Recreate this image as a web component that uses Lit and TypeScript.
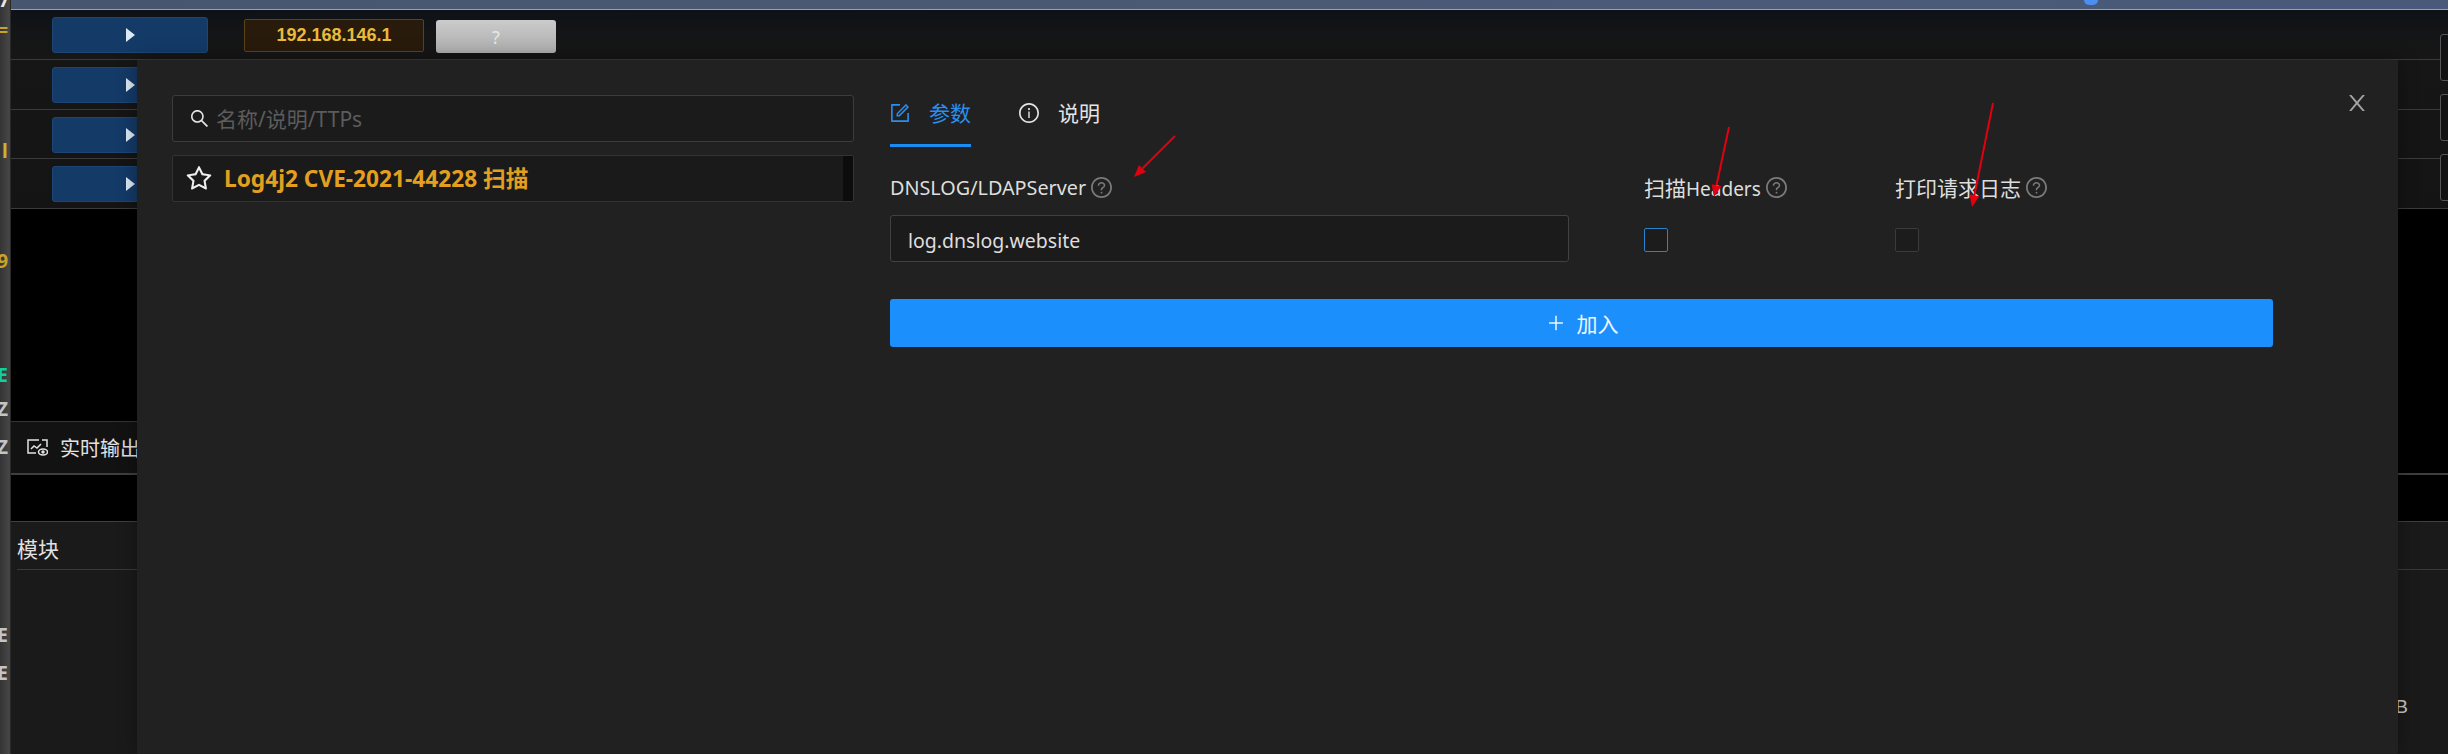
import { LitElement, html, css, svg } from "lit";
import { customElement } from "lit/decorators.js";

const CIRCLE = "M512 64C264.6 64 64 264.6 64 512s200.6 448 448 448 448-200.6 448-448S759.4 64 512 64zm0 820c-205.4 0-372-166.6-372-372s166.6-372 372-372 372 166.6 372 372-166.6 372-372 372z";
const ICONS: Record<string, string[]> = {
  search: ["M909.6 854.5L649.9 594.8C690.2 542.7 712 479 712 412c0-80.2-31.3-155.4-87.9-212.1-56.6-56.7-132-87.9-212.1-87.9s-155.5 31.3-212.1 87.9C143.2 256.5 112 331.8 112 412c0 80.1 31.3 155.5 87.9 212.1C256.5 680.8 331.8 712 412 712c67 0 130.6-21.8 182.7-62l259.7 259.6a8.2 8.2 0 0011.6 0l43.6-43.5a8.2 8.2 0 000-11.6zM570.4 570.4C528 612.7 471.8 636 412 636s-116-23.3-158.4-65.6C211.3 528 188 471.8 188 412s23.3-116.1 65.6-158.4C296 211.3 352.2 188 412 188s116.1 23.2 158.4 65.6S636 352.2 636 412s-23.3 116.1-65.6 158.4z"],
  star: ["M908.1 353.1l-253.9-36.9L540.7 86.1c-3.1-6.3-8.2-11.4-14.5-14.5-15.8-7.8-35-1.3-42.9 14.5L369.8 316.2l-253.9 36.9c-7 1-13.4 4.3-18.3 9.3a32.05 32.05 0 00.6 45.3l183.7 179.1-43.4 252.9a31.95 31.95 0 0046.4 33.7L512 754l227.1 119.4c6.2 3.3 13.4 4.4 20.3 3.2 17.4-3 29.1-19.5 26.1-36.9l-43.4-252.9 183.7-179.1c5-4.9 8.3-11.3 9.3-18.3 2.7-17.5-9.5-33.7-27-36.3zM664.8 561.6l36.1 210.3L512 672.7 323.1 772l36.1-210.3-152.8-149L417.6 382 512 190.7 606.4 382l211.2 30.7-152.8 148.9z"],
  info: [CIRCLE, "M464 336a48 48 0 1096 0 48 48 0 10-96 0zm72 112h-48c-4.4 0-8 3.6-8 8v272c0 4.4 3.6 8 8 8h48c4.4 0 8-3.6 8-8V456c0-4.4-3.6-8-8-8z"],
  help: [CIRCLE, "M623.6 316.7C593.6 290.4 554 276 512 276s-81.6 14.5-111.6 40.7C369.2 344 352 380.7 352 420v7.6c0 4.4 3.6 8 8 8h48c4.4 0 8-3.6 8-8V420c0-44.1 43.1-80 96-80s96 35.9 96 80c0 31.1-22 59.6-56.1 72.7-21.2 8.1-39.2 22.3-52.1 40.9-13.1 19-19.9 41.8-19.9 64.9V620c0 4.4 3.6 8 8 8h48c4.4 0 8-3.6 8-8v-22.7a48.3 48.3 0 0130.9-44.8c59-22.7 97.1-74.7 97.1-132.5.1-39.3-17.1-76-48.3-103.3zM472 732a40 40 0 1080 0 40 40 0 10-80 0z"],
  close: ["M563.8 512l262.5-312.9c4.4-5.2.7-13.1-6.1-13.1h-79.8c-4.7 0-9.2 2.1-12.3 5.7L511.6 449.8 295.1 191.7c-3-3.6-7.5-5.7-12.3-5.7H203c-6.8 0-10.5 7.9-6.1 13.1L459.4 512 196.9 824.9A7.95 7.95 0 00203 838h79.8c4.7 0 9.2-2.1 12.3-5.7l216.5-258.1 216.5 258.1c3 3.6 7.5 5.7 12.3 5.7h79.8c6.8 0 10.5-7.9 6.1-13.1L563.8 512z"],
  plus: ["M482 152h60q8 0 8 8v704q0 8-8 8h-60q-8 0-8-8V160q0-8 8-8z", "M176 474h672q8 0 8 8v60q0 8-8 8H176q-8 0-8-8v-60q0-8 8-8z"],
  form: ["M904 512h-56c-4.4 0-8 3.6-8 8v320H184V184h320c4.4 0 8-3.6 8-8v-56c0-4.4-3.6-8-8-8H144c-17.7 0-32 14.3-32 32v736c0 17.7 14.3 32 32 32h736c17.7 0 32-14.3 32-32V520c0-4.4-3.6-8-8-8z", "M355.9 534.9L354 653.8c-.1 8.9 7.1 16.2 16 16.2h.4l118-2.9c2-.1 4-.9 5.4-2.3l415.9-415c3.1-3.1 3.1-8.2 0-11.3L785.4 114.3c-1.6-1.6-3.6-2.3-5.7-2.3s-4.1.8-5.7 2.3l-415.8 415a8.3 8.3 0 00-2.3 5.6zm63.5 23.6L779.7 199l45.2 45.1-360.5 359.7-45.7 1.1.7-46.4z"],
};

const icon = (name: string, cls: string) => html`<svg class="ico ${cls}" viewBox="64 64 896 896" fill="currentColor">${ICONS[name].map((d) => svg`<path d=${d}></path>`)}</svg>`;

const MARKS = [
  { top: 0, h: 7, t: "7", c: "#e8e8e8" },
  { top: 25, h: 11, t: "=", c: "#c9a227" },
  { top: 143, h: 15, t: "J", c: "#c9b52c" },
  { top: 253, h: 17, t: "9", c: "#c9a227" },
  { top: 367, h: 16, t: "E", c: "#12cf9c" },
  { top: 400, h: 18, t: "Z", c: "#c4c4c4" },
  { top: 438, h: 19, t: "Z", c: "#c4c4c4" },
  { top: 627, h: 16, t: "E", c: "#c4c4c4" },
  { top: 665, h: 17, t: "E", c: "#c4c4c4" },
];

const ARROWS = [
  { x1: 1175, y1: 136, x2: 1134, y2: 177 },
  { x1: 1729, y1: 127, x2: 1714, y2: 197 },
  { x1: 1993, y1: 103, x2: 1972, y2: 207 },
];

@customElement("app-root")
export class AppRoot extends LitElement {
  static styles = css`
    :host {
      display: block;
      position: relative;
      width: 2448px;
      height: 754px;
      overflow: hidden;
      background: #000;
      color: #e4e4e4;
      font-family: "Noto Sans", "Noto Sans CJK SC", sans-serif;
    }
    * { box-sizing: border-box; }
    .page { display: grid; grid-template-columns: 11px 1fr; height: 754px; }
    .strip { display: flex; flex-direction: column; background: linear-gradient(90deg, #343434, #474747 85%, #1c1c1c); }
    .mark { display: flex; justify-content: flex-end; width: 8px; overflow: hidden; font-size: 19px; line-height: 1; font-weight: 700; align-items: center; flex: none; }
    .main { display: flex; flex-direction: column; min-width: 0; }
    .topbar { position: relative; height: 10px; flex: none; background: linear-gradient(90deg, #46566e, #4a5a75 50%, #49597a); border-bottom: 1px solid #9aa3ad; }
    .topdot { position: absolute; left: 2073px; top: 0; width: 14px; height: 5px; background: #4d8ff0; border-radius: 0 0 7px 7px; }
    .rows { display: grid; grid-template-rows: 50px 50px 49px 50px; flex: none; background: linear-gradient(180deg, #0e1216, #161616 18%, #141414); }
    .row { display: flex; gap: 12px; padding: 7px 0 0 41px; border-bottom: 1px solid #3b3b3b; }
    .play { display: flex; align-items: center; justify-content: center; width: 156px; height: 36px; flex: none; background: #143a68; border-radius: 3px; border: 1px solid #1d4674; }
    .play i { display: block; width: 0; height: 0; border-left: 9px solid #dbe8f5; border-top: 7.5px solid transparent; border-bottom: 7.5px solid transparent; }
    .play + .ip { margin-left: 24px; }
    .ip { display: flex; align-items: center; justify-content: center; width: 180px; height: 33px; margin-top: 2px; background: #281b0c; border: 1px solid #5c4318; border-radius: 2px; color: #e9bb3c; font-family: "Liberation Sans", sans-serif; font-weight: 700; font-size: 18px; }
    .q { display: flex; align-items: center; justify-content: center; width: 120px; height: 33px; margin-top: 3px; background: linear-gradient(180deg, #cbcbcb, #adadad); border-radius: 3px; color: #e6e6e6; font-size: 18px; }
    .console { height: 212px; flex: none; background: #000; }
    .tabbar { height: 54px; flex: none; background: #000; border-bottom: 2px solid #3f3f3f; }
    .tab { display: flex; align-items: center; gap: 12px; height: 52px; width: 300px; padding: 0 0 0 16px; background: #121212; border-top: 1px solid #333; font-size: 20px; color: #e2e2e2; }
    .tab svg { width: 21px; height: 17px; flex: none; }
    .gap { height: 47px; flex: none; background: #000; border-bottom: 1px solid #3f3f3f; }
    .panel { flex: 1; display: flex; flex-direction: column; background: #1a1a1a; }
    .panel-head { height: 48px; flex: none; margin-left: 6px; padding-top: 4px; display: flex; align-items: center; font-size: 21px; border-bottom: 1px solid #3a3a3a; color: #e2e2e2; }
    .panel-body { flex: 1; display: flex; justify-content: flex-end; padding: 126px 40px 0 0; font-family: "Liberation Sans", sans-serif; font-size: 19px; color: #c8c8c8; }
    .sidebtns { position: absolute; left: 2440px; top: 34px; display: flex; flex-direction: column; gap: 13px; }
    .sidebtns div { width: 40px; height: 47px; background: #121212; border: 1px solid #555; border-radius: 3px; }
    .modal { position: absolute; left: 137px; top: 60px; width: 2261px; height: 694px; padding: 35px 0 0 35px; display: grid; grid-template-columns: 682px 1383px; column-gap: 36px; background: #212121; box-shadow: 0 0 18px rgba(0, 0, 0, .35); }
    .ico { display: block; flex: none; }
    .close { position: absolute; left: 2209px; top: 32px; width: 22px; height: 22px; color: #a3a3a3; }
    .left { display: flex; flex-direction: column; gap: 13px; }
    .search { display: flex; align-items: center; gap: 7px; height: 47px; padding: 0 0 1px 17px; background: #1b1b1b; border: 1px solid #3c3c3c; border-radius: 3px; }
    .search .ico { width: 19px; height: 19px; color: #e4e4e4; }
    .search span { font-size: 21px; color: #5c5c5c; }
    .item { display: flex; align-items: stretch; height: 47px; background: #1a1a1a; border: 1px solid #333; border-radius: 2px; }
    .item-main { flex: 1; display: flex; align-items: center; gap: 12px; padding: 0 0 3px 13px; }
    .item-main .ico { width: 26px; height: 26px; color: #f0f0f0; margin-top: 3px; }
    .item-main b { font-size: 22.7px; color: #e3a020; font-weight: 700; }
    .sb { width: 10px; flex: none; background: #0c0c0c; }
    .tabs { display: flex; gap: 48px; height: 52px; }
    .t { display: flex; gap: 19px; height: 52px; padding-top: 8px; align-items: flex-start; font-size: 21px; line-height: 20px; color: #e4e4e4; }
    .t .ico { width: 20px; height: 20px; }
    .t.on { color: #2b8fef; position: relative; border-bottom: 3px solid #1c8cf5; }
    .form { display: grid; grid-template-columns: 754px 251px 1fr; margin-top: 30px; }
    .lab { display: flex; align-items: center; gap: 5px; height: 20px; font-size: 19.8px; color: #dedede; }
    .lab .ico { width: 21px; height: 21px; color: #7a7a7a; }
    .lab .zh { font-size: 21px; }
    .lab .en { font-size: 19px; }
    .input { display: flex; align-items: center; width: 679px; height: 47px; margin-top: 18px; padding: 3px 17px 0; background: #1b1b1b; border: 1px solid #414141; border-radius: 3px; font-size: 19.5px; color: #dedede; }
    .cb { width: 24px; height: 24px; margin-top: 31px; background: #1c1c1c; border: 1px solid #3b3b3b; border-radius: 2px; }
    .cb.on { border-color: #2a82cc; }
    .add { display: flex; align-items: center; justify-content: center; gap: 12px; width: 1383px; height: 48px; margin-top: 37px; padding-left: 2px; background: #1b8ffb; border-radius: 3px; color: #eef6ff; font-size: 21px; }
    .add .ico { width: 18px; height: 18px; }
    .arrows { position: absolute; left: 0; top: 0; width: 2448px; height: 754px; pointer-events: none; }
  `;

  render() {
    let y = 0;
    return html`
      <div class="page">
        <div class="strip">
          ${MARKS.map((m) => {
            const gap = m.top - y;
            y = m.top + m.h;
            return html`<div class="mark" style="margin-top:${gap}px;height:${m.h}px;color:${m.c}"><span>${m.t}</span></div>`;
          })}
        </div>
        <div class="main">
          <div class="topbar"><div class="topdot"></div></div>
          <div class="rows">
            <div class="row">
              <div class="play"><i></i></div>
              <div class="ip">192.168.146.1</div>
              <div class="q">?</div>
            </div>
            <div class="row"><div class="play"><i></i></div></div>
            <div class="row"><div class="play"><i></i></div></div>
            <div class="row"><div class="play"><i></i></div></div>
          </div>
          <div class="console"></div>
          <div class="tabbar">
            <div class="tab">
              <svg viewBox="0 0 21 17" fill="none" stroke="currentColor" stroke-width="1.5">
                <path d="M12 1H1v13h8M15 1h5v7"></path>
                <path d="M4 10l3-3 3 2 4-4"></path>
                <ellipse cx="16" cy="13" rx="4.5" ry="3"></ellipse>
                <circle cx="16" cy="13" r="1" fill="currentColor"></circle>
              </svg>
              <span>实时输出</span>
            </div>
          </div>
          <div class="gap"></div>
          <div class="panel">
            <div class="panel-head"><span>模块</span></div>
            <div class="panel-body"><span>B</span></div>
          </div>
        </div>
      </div>
      <div class="sidebtns"><div></div><div></div><div></div></div>
      <div class="modal">
        ${icon("close", "close")}
        <div class="left">
          <div class="search">${icon("search", "")}<span>名称/说明/TTPs</span></div>
          <div class="item">
            <div class="item-main">${icon("star", "")}<b>Log4j2 CVE-2021-44228 扫描</b></div>
            <div class="sb"></div>
          </div>
        </div>
        <div class="right">
          <div class="tabs">
            <div class="t on">${icon("form", "")}<span>参数</span></div>
            <div class="t">${icon("info", "")}<span>说明</span></div>
          </div>
          <div class="form">
            <div>
              <div class="lab"><span>DNSLOG/LDAPServer</span>${icon("help", "")}</div>
              <div class="input">log.dnslog.website</div>
            </div>
            <div>
              <div class="lab"><span><span class="zh">扫描</span><span class="en">Headers</span></span>${icon("help", "")}</div>
              <div class="cb on"></div>
            </div>
            <div>
              <div class="lab"><span class="zh">打印请求日志</span>${icon("help", "")}</div>
              <div class="cb"></div>
            </div>
          </div>
          <div class="add">${icon("plus", "")}<span>加入</span></div>
        </div>
      </div>
      <svg class="arrows" viewBox="0 0 2448 754">
        ${ARROWS.map((a) => {
          const len = Math.hypot(a.x2 - a.x1, a.y2 - a.y1);
          const ux = (a.x2 - a.x1) / len;
          const uy = (a.y2 - a.y1) / len;
          const bx = a.x2 - ux * 12;
          const by = a.y2 - uy * 12;
          return svg`<line x1=${a.x1} y1=${a.y1} x2=${bx} y2=${by} stroke="#e0000f" stroke-width="2"></line>
            <polygon points="${a.x2},${a.y2} ${bx - uy * 5},${by + ux * 5} ${bx + uy * 5},${by - ux * 5}" fill="#e0000f"></polygon>`;
        })}
      </svg>
    `;
  }
}
